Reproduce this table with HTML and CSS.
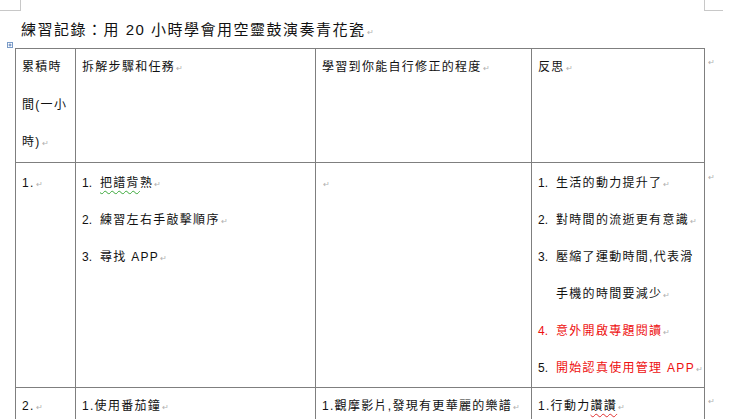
FILE: index.html
```html
<!DOCTYPE html>
<html lang="zh-Hant">
<head>
<meta charset="utf-8">
<link rel="stylesheet" href="styles.css">
</head>
<body>
<div class="mark mark-tl"></div>
<div class="mark mark-tr"></div>
<div class="doc">
  <h1 class="title">練習記錄：用 20 小時學會用空靈鼓演奏青花瓷<span class="pm">↵</span></h1>
  <div class="table-wrap">
    <svg class="handle" width="6" height="6" viewBox="0 0 6 6"><rect x="0.5" y="0.5" width="5" height="5" fill="#fff" stroke="#7a9cc8"/><path d="M3 1.5v3M1.5 3h3" stroke="#5a7fb8" stroke-width="1"/></svg>
    <table class="log">
      <colgroup>
        <col class="c1"><col class="c2"><col class="c3"><col class="c4"><col class="c5">
      </colgroup>
      <tr class="head">
        <td>累積時<br>間(一小<br>時)<span class="pm">↵</span></td>
        <td>拆解步驟和任務<span class="pm">↵</span></td>
        <td>學習到你能自行修正的程度<span class="pm">↵</span></td>
        <td>反思<span class="pm">↵</span></td>
        <td class="end"><span class="pm">↵</span></td>
      </tr>
      <tr class="mid">
        <td class="num-cell">1.<span class="pm">↵</span></td>
        <td>
          <ol class="items">
            <li><span class="n">1.</span><span class="t"><span class="grammar">把譜背</span>熟<span class="pm">↵</span></span></li>
            <li><span class="n">2.</span><span class="t">練習左右手敲擊順序<span class="pm">↵</span></span></li>
            <li><span class="n">3.</span><span class="t">尋找 APP<span class="pm">↵</span></span></li>
          </ol>
        </td>
        <td><span class="pm">↵</span></td>
        <td>
          <ol class="items">
            <li><span class="n">1.</span><span class="t">生活的動力提升了<span class="pm">↵</span></span></li>
            <li><span class="n">2.</span><span class="t">對時間的流逝更有意識<span class="pm">↵</span></span></li>
            <li class="two"><span class="n">3.</span><span class="t">壓縮了運動時間,代表滑<br>手機的時間要減少<span class="pm">↵</span></span></li>
            <li class="red"><span class="n">4.</span><span class="t">意外開啟專題閱讀<span class="pm">↵</span></span></li>
            <li><span class="n">5.</span><span class="t red">開始認真使用管理 APP<span class="pm">↵</span></span></li>
          </ol>
        </td>
        <td class="end"><span class="pm">↵</span></td>
      </tr>
      <tr class="last">
        <td class="num-cell">2.<span class="pm">↵</span></td>
        <td>1.使用番茄鐘<span class="pm">↵</span></td>
        <td>1.觀摩影片,發現有更華麗的樂譜<span class="pm">↵</span></td>
        <td>1.行動力<span class="spell">讚讚</span><span class="pm">↵</span></td>
        <td class="end"><span class="pm">↵</span></td>
      </tr>
    </table>
  </div>
</div>
</body>
</html>
```

FILE: styles.css
```css
html, body {
  margin: 0;
  padding: 0;
  background: #fff;
  overflow: hidden;
}
body {
  width: 740px;
  height: 419px;
  position: relative;
  font-family: "Liberation Sans", "Noto Sans CJK TC", sans-serif;
  color: #111;
}
.mark {
  position: absolute;
  top: 0;
  width: 20px;
  height: 10px;
}
.mark-tl {
  left: 0;
  border-right: 1px solid #c8c8c8;
  border-bottom: 1px solid #c8c8c8;
}
.mark-tr {
  left: 704px;
  width: 18px;
  border-left: 1px solid #c8c8c8;
  border-bottom: 1px solid #c8c8c8;
}
.doc {
  padding-left: 15px;
}
.title {
  margin: 0 0 8px 6px;
  padding-top: 20px;
  height: 20px;
  font-size: 15px;
  line-height: 20px;
  font-weight: normal;
  letter-spacing: 1.5px;
  color: #111;
}
.pm {
  font-size: 8px;
  line-height: 0;
  color: #b0b0b0;
  letter-spacing: 0;
  margin-left: 1px;
}
.table-wrap {
  position: relative;
}
.handle {
  position: absolute;
  left: -8px;
  top: -6px;
}
.log {
  border-collapse: collapse;
  table-layout: fixed;
  width: 703px;
  font-size: 12px;
  letter-spacing: 1.3px;
}
.c1 { width: 60px; }
.c2 { width: 240px; }
.c3 { width: 216px; }
.c4 { width: 173px; }
.c5 { width: 14px; }
.log td {
  border: 1px solid #7f7f7f;
  vertical-align: top;
  padding: 0 4px 0 6px;
  line-height: 37.5px;
  white-space: nowrap;
}
.log tr.mid td {
  padding-top: 2px;
  line-height: 37.1px;
}
.log td.end {
  border: none;
  padding: 8px 0 0 2px;
  line-height: 8px;
}
.log tr.mid td.end {
  padding-top: 10px;
  line-height: 8px;
}
.log tr.last td {
  height: 80px;
}
.items {
  list-style: none;
  margin: 0;
  padding: 0;
}
.items li {
  display: flex;
  height: 37.1px;
}
.items li.two {
  height: 74.2px;
}
.items .n {
  width: 18px;
  flex: none;
  letter-spacing: 0;
}
.red {
  color: #ee1111;
}
.grammar {
  text-decoration: underline wavy #3aa83a;
  text-decoration-thickness: 1px;
  text-underline-offset: 3px;
}
.spell {
  text-decoration: underline wavy #e03030;
  text-decoration-thickness: 1px;
  text-underline-offset: 3px;
}
```
